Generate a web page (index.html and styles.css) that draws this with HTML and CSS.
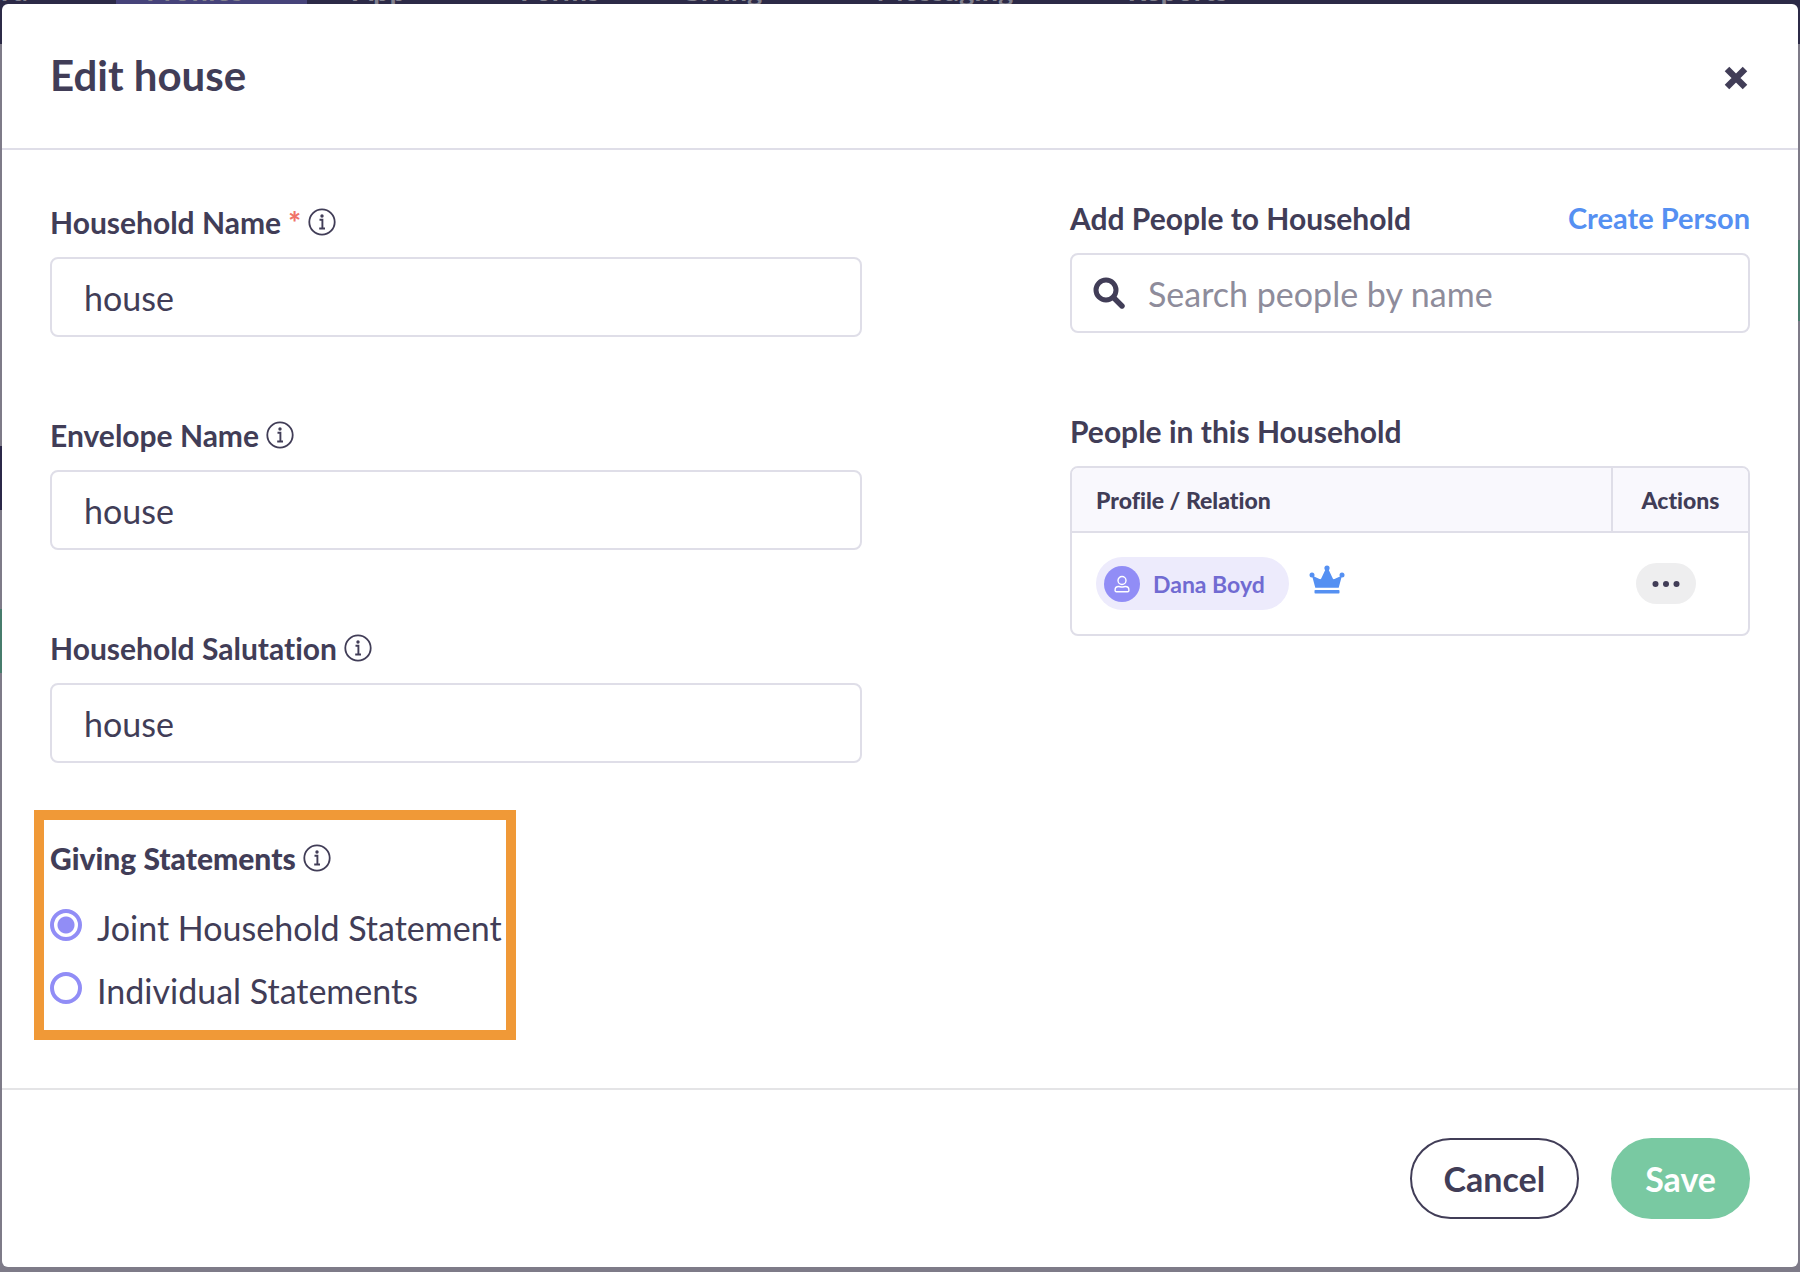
FILE: index.html
```html
<!DOCTYPE html>
<html lang="en">
<head>
<meta charset="utf-8">
<meta name="viewport" content="width=device-width, initial-scale=1">
<title>Edit house</title>
<link rel="stylesheet" href="styles.css">
</head>
<body>
<svg class="symbols" aria-hidden="true">
  <symbol id="info" viewBox="0 0 28 28">
    <circle cx="14" cy="14" r="12.700" fill="none" stroke="currentColor" stroke-width="1.800"/>
    <circle cx="14" cy="8" r="1.700" fill="currentColor"/>
    <path d="M11.500 11.800h2.900v8.400M11.200 20.500h5.800" fill="none" stroke="currentColor" stroke-width="1.900"/>
  </symbol>
</svg>

<div class="page" aria-hidden="true">
  <nav class="nav">
    <span class="nav-item nav-first">Dashboard</span>
    <span class="nav-item nav-active">Profiles</span>
    <span class="nav-item">App</span>
    <span class="nav-item nav-forms">Forms</span>
    <span class="nav-item">Giving</span>
    <span class="nav-item">Messaging</span>
    <span class="nav-item">Reports</span>
  </nav>
  <div class="page-body">
    <div class="rail rail-left"><i class="block dark"></i><i class="block green"></i></div>
    <div class="rail rail-right"><i class="block tall green"></i></div>
  </div>
</div>

<div class="overlay">
  <form class="modal" role="dialog" aria-labelledby="title">
    <header class="modal-header">
      <h1 id="title">Edit house</h1>
      <button type="button" class="close" aria-label="Close">
        <svg width="24" height="24" viewBox="0 0 24 24"><path d="M3 3l18 18M21 3L3 21" stroke="currentColor" stroke-width="6.400"/></svg>
      </button>
    </header>

    <div class="modal-body">
      <div class="details">
        <div class="field">
          <div class="label-row">
            <label for="name">Household Name <span class="required">*</span></label>
            <svg class="info"><use href="#info"/></svg>
          </div>
          <input class="text-input" id="name" type="text" value="house" required>
        </div>
        <div class="field">
          <div class="label-row">
            <label for="envelope">Envelope Name</label>
            <svg class="info"><use href="#info"/></svg>
          </div>
          <input class="text-input" id="envelope" type="text" value="house">
        </div>
        <div class="field">
          <div class="label-row">
            <label for="salutation">Household Salutation</label>
            <svg class="info"><use href="#info"/></svg>
          </div>
          <input class="text-input" id="salutation" type="text" value="house">
        </div>
        <div class="statements" role="radiogroup" aria-labelledby="statements-label">
          <div class="label-row">
            <span class="strong" id="statements-label">Giving Statements</span>
            <svg class="info"><use href="#info"/></svg>
          </div>
          <div class="option">
            <input type="radio" name="statement" id="joint" checked>
            <label for="joint">Joint Household Statement</label>
          </div>
          <div class="option">
            <input type="radio" name="statement" id="individual">
            <label for="individual">Individual Statements</label>
          </div>
        </div>
      </div>

      <div class="people">
        <div class="field">
          <div class="label-row spread">
            <label for="search">Add People to Household</label>
            <a href="#create">Create Person</a>
          </div>
          <div class="search">
            <svg width="32" height="32" viewBox="0 0 32 32"><circle cx="13" cy="13" r="10" fill="none" stroke="currentColor" stroke-width="5"/><path d="M20.500 20.500l8.500 8.500" stroke="currentColor" stroke-width="5.400" stroke-linecap="round"/></svg>
            <input id="search" type="text" placeholder="Search people by name">
          </div>
        </div>
        <div class="field">
          <div class="label-row"><h2>People in this Household</h2></div>
          <div class="table-frame">
            <table>
              <thead><tr><th>Profile / Relation</th><th class="actions">Actions</th></tr></thead>
              <tbody>
                <tr>
                  <td>
                    <div class="profile">
                      <a class="chip" href="#dana">
                        <span class="avatar"><svg width="16" height="18" viewBox="0 0 16 18" fill="none" stroke="currentColor" stroke-width="1.400"><circle cx="8" cy="5.500" r="4"/><path d="M4.600 11.500c1.200 0 1.800.5 3.400.5s2.200-.5 3.400-.5c2.100 0 3.500 1.400 3.500 3.400v.6c0 .7-.5 1.200-1.200 1.200H2.300c-.7 0-1.200-.5-1.200-1.200v-.6c0-2 1.400-3.400 3.500-3.400z"/></svg></span>
                        Dana Boyd
                      </a>
                      <svg class="crown" width="36" height="30" viewBox="0 0 36 30" fill="currentColor"><circle cx="18" cy="3" r="2.600"/><circle cx="3" cy="10" r="2.500"/><circle cx="33" cy="10" r="2.500"/><path d="M3 10.500l1.500.8 6 2.700c.7.300 1.300.1 1.700-.6L16.700 4h2.600l4.500 9.400c.4.700 1 .9 1.700.6l6-2.700 1.500-.8-3.300 12.300H6.300z"/><rect x="5.500" y="25" width="25" height="3.600" rx=".8"/></svg>
                    </div>
                  </td>
                  <td class="actions">
                    <button type="button" class="more" aria-label="More actions"><svg width="28" height="6" viewBox="0 0 28 6" fill="currentColor"><circle cx="3.500" cy="3" r="3"/><circle cx="14" cy="3" r="3"/><circle cx="24.500" cy="3" r="3"/></svg></button>
                  </td>
                </tr>
              </tbody>
            </table>
          </div>
        </div>
      </div>
    </div>

    <footer class="modal-footer">
      <button type="button" class="button cancel">Cancel</button>
      <button type="submit" class="button save">Save</button>
    </footer>
  </form>
</div>
</body>
</html>
```
FILE: styles.css
```css
* { box-sizing: border-box; }

body {
  position: relative;
  margin: 0;
  min-height: 100vh;
  overflow-x: hidden;
  color: #413d57;
  font-family: Lato, "Open Sans", sans-serif;
  font-size: 34px;
  font-variant-ligatures: none;
}

h1, h2 { margin: 0; font-weight: 700; }
button, input { font: inherit; color: inherit; }
a { color: #5590f2; text-decoration: none; }
svg { display: block; flex: none; }
.symbols { position: absolute; width: 0; height: 0; }

/* Dimmed page behind the dialog */
.page {
  position: absolute;
  inset: 0;
  overflow: hidden;
  background: #7e7b88;
}
.nav {
  display: flex;
  height: 88px;
  margin-top: -44px;
  background: #2c2a47;
  color: #83828f;
  font-size: 29px;
  font-weight: 700;
  line-height: 68px;
}
.nav-item { flex: none; padding-right: 114px; }
.nav-forms { padding-right: 80px; }
.nav-first {
  display: flex;
  justify-content: flex-end;
  width: 116px;
  padding-right: 88px;
}
.nav-active {
  width: 191px;
  margin-right: 46px;
  padding: 0 0 0 30px;
  background: #46437a;
}
.page-body { display: flex; justify-content: space-between; }
.rail { width: 2px; }
.rail-left { padding-top: 402px; }
.rail-right { padding-top: 196px; }
.block { display: block; height: 64px; margin-bottom: 99px; }
.tall { height: 81px; }
.dark { background: #2b2848; }
.green { background: #477c6c; }

/* Dialog */
.overlay {
  position: relative;
  display: flex;
  min-height: 100vh;
  padding: 4px 2px 5px;
}
.modal {
  display: flex;
  flex: 1;
  flex-direction: column;
  border-radius: 6px;
  background: #fff;
}
.modal-header {
  display: flex;
  align-items: center;
  justify-content: space-between;
  height: 146px;
  padding: 0 50px 2px 48px;
  border-bottom: 2px solid #dfdee8;
}
h1 { font-size: 42px; line-height: 48px; }
.close {
  display: flex;
  padding: 6px 0 0;
  border: 0;
  background: none;
}

.modal-body {
  display: grid;
  flex: 1;
  grid-template-columns: 812fr 680fr;
  column-gap: 208px;
  padding: 50px 48px 48px;
}
.field { margin-bottom: 80px; }
.details { padding-top: 4px; }
.label-row {
  display: flex;
  align-items: center;
  gap: 7px;
  height: 38px;
  margin-bottom: 15px;
  padding-bottom: 2px;
  font-size: 30px;
  font-weight: 700;
  line-height: 36px;
}
h2 { font-size: 30px; }
.label-row a { font-size: 29px; }
.spread { justify-content: space-between; }
.required { color: #f0746a; font-weight: 900; }
.info { width: 28px; height: 28px; }

.text-input, .search {
  display: flex;
  align-items: center;
  width: 100%;
  height: 80px;
  border: 2px solid #dfdee8;
  border-radius: 8px;
  background: #fff;
}
.text-input { padding: 0 32px; }
.search { gap: 23px; padding: 0 21px; }
.search input {
  flex: 1;
  min-width: 0;
  padding: 0;
  border: 0;
  outline: 0;
  background: none;
}
.search input::placeholder { color: #8e8c9b; opacity: 1; }

.statements {
  width: fit-content;
  margin: -33px 0 0 -16px;
  padding: 20px 4px 7px 6px;
  border: 10px solid #f09937;
}
.statements .label-row { margin-bottom: 19px; }
.strong { font-weight: 900; }
.option {
  display: flex;
  gap: 15px;
  height: 63px;
  line-height: 62px;
}
.option input {
  appearance: none;
  flex: none;
  width: 32px;
  height: 32px;
  margin: 12px 0 0;
  border: 4px solid #918df6;
  border-radius: 50%;
}
.option input:checked {
  background: radial-gradient(circle, #918df6 8px, #fff 9px);
}

/* People table */
.table-frame {
  overflow: hidden;
  border: 2px solid #dfdee8;
  border-radius: 8px;
}
table { width: 100%; border-collapse: collapse; table-layout: fixed; }
th {
  height: 64px;
  padding: 0 24px;
  border-bottom: 2px solid #dfdee8;
  background: #f9f8fd;
  font-size: 23px;
  font-weight: 900;
  text-align: left;
}
td { height: 102px; padding: 0 24px; }
.actions { width: 136px; }
th.actions { padding: 0; border-left: 2px solid #dfdee8; text-align: center; }
.profile { display: flex; align-items: center; gap: 20px; }
.chip {
  display: flex;
  align-items: center;
  gap: 13px;
  height: 53px;
  padding: 0 24px 0 8px;
  border-radius: 27px;
  background: #edebfc;
  color: #716bd2;
  font-size: 23px;
  font-weight: 700;
}
.crown { margin-bottom: 8px; color: #5590f2; }
.avatar {
  display: grid;
  place-items: center;
  width: 36px;
  height: 36px;
  border-radius: 50%;
  background: #918df6;
  color: #fff;
}
.more {
  display: grid;
  place-items: center;
  width: 60px;
  height: 41px;
  padding: 0;
  border: 0;
  border-radius: 21px;
  background: #eeeeef;
}

.modal-footer {
  display: flex;
  justify-content: flex-end;
  gap: 32px;
  padding: 48px;
  border-top: 2px solid #e4e4e6;
}
.button {
  height: 81px;
  padding: 0 32px;
  border: 2px solid #413d57;
  border-radius: 41px;
  background: #fff;
  font-weight: 700;
}
.save { border-color: #79c9a2; background: #79c9a2; color: #fff; }
```
